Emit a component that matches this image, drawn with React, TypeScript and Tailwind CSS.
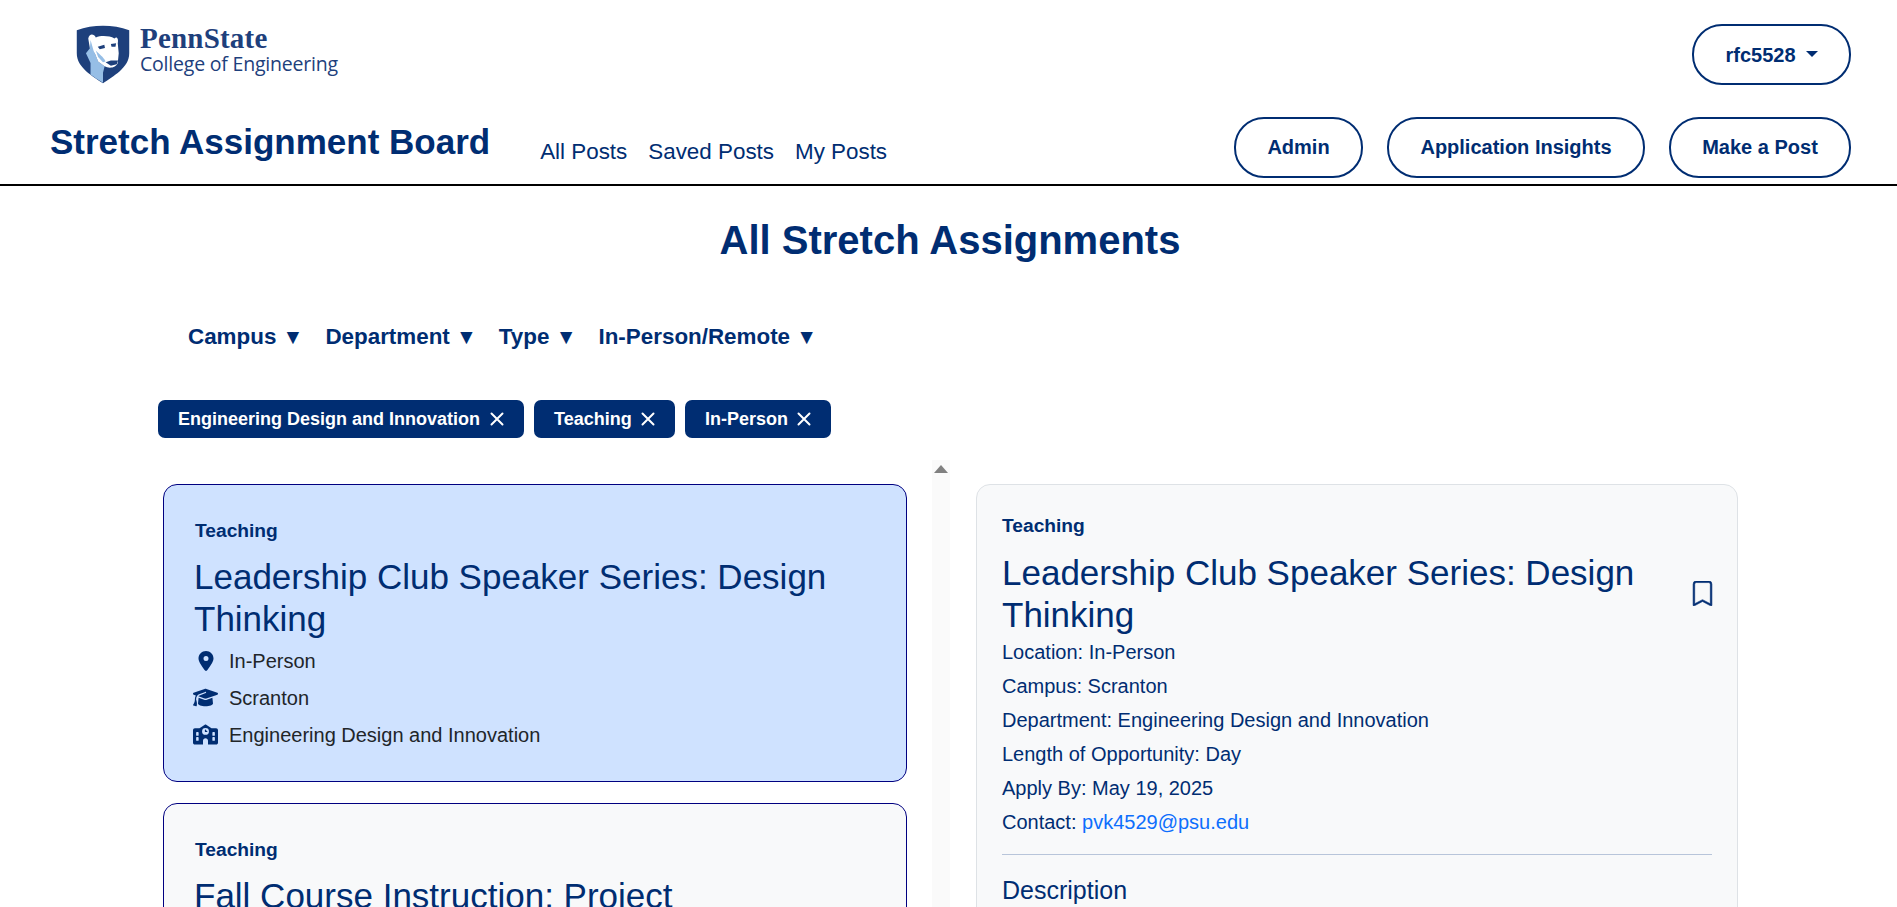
import { FaGraduationCap, FaSchool, FaLocationDot } from "react-icons/fa6";
import { BsBookmark } from "react-icons/bs";

function Shield() {
  return (
    <svg viewBox="18 14 164 180" className="w-[54px] h-[59px] shrink-0">
      <path d="M20 30 C70 12 130 12 180 30 L180 100 C180 145 130 170 100 192 C70 170 20 145 20 100 Z" fill="#1e407c" />
      <path d="M48 100 L60 85 L75 100 L85 125 L105 140 L100 160 L100 190 L80 178 L62 165 L62 130 Z" fill="#96bee6" />
      <path d="M55 55 C58 40 72 40 78 52 C95 45 120 47 135 55 C142 48 148 55 145 70 L148 100 L145 130 C140 145 118 148 105 140 L85 125 L75 100 L60 85 Z" fill="#fff" />
      <path d="M62 60 L72 95 L85 125 L75 118 L60 85 Z M78 92 C90 105 100 110 108 125 L100 128 L85 112 Z" fill="#96bee6" />
      <path d="M84 80 L104 74 L106 84 L90 88 Z M124 72 L140 70 L138 80 L126 80 Z" fill="#1e407c" />
      <path d="M108 128 L124 122 L146 122 L142 134 L124 138 Z" fill="#1e407c" />
    </svg>
  );
}

function PillButton({ children, className }: { children: React.ReactNode; className: string }) {
  return (
    <button className={`h-[61px] rounded-[30px] border-2 border-[#002d72] text-[#002d72] font-bold text-[20px] bg-white flex items-center justify-center ${className}`}>
      {children}
    </button>
  );
}

function Tag({ label, className }: { label: string; className: string }) {
  return (
    <span className={`h-[38px] rounded-[7px] bg-[#002d72] text-white font-bold text-[18px] flex items-center justify-between pl-[20px] pr-[20px] ${className}`}>
      <span>{label}</span>
      <svg viewBox="0 0 14 14" className="w-[14px] h-[14px]">
        <path d="M1.5 1.5 L12.5 12.5 M12.5 1.5 L1.5 12.5" stroke="#fff" strokeWidth="2" strokeLinecap="round" />
      </svg>
    </span>
  );
}

function Meta({ icon, text }: { icon: React.ReactNode; text: string }) {
  return (
    <div className="flex items-center h-[37px]">
      <span className="w-[25px] h-[25px] flex items-center justify-center text-[#002d72]">{icon}</span>
      <span className="ml-[11px] text-[20px] text-[#212529]">{text}</span>
    </div>
  );
}

function Filter({ label }: { label: string }) {
  return (
    <span className="h-[27px] overflow-visible">
      {label} <span className="text-[21px] leading-none">▼</span>
    </span>
  );
}

export default function App() {
  return (
    <div className="h-[907px] overflow-hidden bg-white text-[#002d72] font-['Liberation_Sans',Arial,sans-serif]">
      <header className="h-[186px] border-b-2 border-black px-[46px] flex flex-col">
        <div className="h-[117px] flex justify-between items-start">
          <div className="flex items-center gap-[10px] ml-[30px] mt-[25px] text-[#1e407c]">
            <Shield />
            <div className="mt-[-10px]">
              <div className="font-['Liberation_Serif',serif] font-bold text-[29px] leading-[29px] tracking-[0.2px]">PennState</div>
              <div className="font-['Open_Sans',sans-serif] text-[19.5px] leading-[22px] tracking-[-0.2px]">College of Engineering</div>
            </div>
          </div>
          <PillButton className="w-[159px] mt-[24px] gap-[10px]">
            <span>rfc5528</span>
            <span className="w-0 h-0 border-x-[6px] border-x-transparent border-t-[6px] border-t-[#002d72] mb-[2px]" />
          </PillButton>
        </div>
        <div className="flex items-start justify-between">
          <div className="flex items-start">
            <div className="ml-[4px] font-bold text-[35px] leading-[42px] mt-[4px]">Stretch Assignment Board</div>
            <nav className="flex gap-[21px] ml-[50px] mt-[21px] text-[22.4px] leading-[27px]">
              <span>All Posts</span>
              <span>Saved Posts</span>
              <span>My Posts</span>
            </nav>
          </div>
          <div className="flex gap-[24px]">
            <PillButton className="w-[129px] pb-[2px]">Admin</PillButton>
            <PillButton className="w-[258px] pb-[2px]">Application Insights</PillButton>
            <PillButton className="w-[182px] pb-[2px]">Make a Post</PillButton>
          </div>
        </div>
      </header>

      <h1 className="text-center font-bold text-[40px] leading-[48px] mt-[30px] pl-[3px]">All Stretch Assignments</h1>

      <div className="flex h-[27px] gap-[22px] ml-[188px] mt-[59px] font-bold text-[22.4px] leading-[27px]">
        <Filter label="Campus" />
        <Filter label="Department" />
        <Filter label="Type" />
        <Filter label="In-Person/Remote" />
      </div>

      <div className="flex gap-[10px] ml-[158px] mt-[50px]">
        <Tag label="Engineering Design and Innovation" className="w-[366px]" />
        <Tag label="Teaching" className="w-[141px]" />
        <Tag label="In-Person" className="w-[146px]" />
      </div>

      <div className="flex ml-[163px] mt-[22px] h-[447px]">
        <div className="w-[744px] pt-[24px] flex flex-col gap-[21px] shrink-0">
          <article className="h-[298px] shrink-0 rounded-[14px] border border-[#000080] bg-[#cfe2ff] pl-[31px] pt-[35px]">
            <div className="font-bold text-[19.2px] leading-[22px]">Teaching</div>
            <h2 className="text-[35px] leading-[42px] mt-[14px] -ml-[1px] w-[680px]">Leadership Club Speaker Series: Design Thinking</h2>
            <div className="mt-[2px] -ml-[2px]">
              <Meta icon={<FaLocationDot size={20} />} text="In-Person" />
              <Meta icon={<FaGraduationCap size={25} />} text="Scranton" />
              <Meta icon={<FaSchool size={25} />} text="Engineering Design and Innovation" />
            </div>
          </article>
          <article className="h-[298px] shrink-0 rounded-[14px] border border-[#000080] bg-[#f8f9fa] pl-[31px] pt-[35px]">
            <div className="font-bold text-[19.2px] leading-[22px]">Teaching</div>
            <h2 className="text-[35px] leading-[42px] mt-[14px] -ml-[1px] w-[680px]">Fall Course Instruction: Project</h2>
          </article>
        </div>
        <div className="w-[18px] ml-[25px] bg-[#fafafa] shrink-0 flex justify-center pt-[3px]">
          <span className="w-0 h-0 border-x-[7px] border-x-transparent border-b-[8px] border-b-[#808080] mt-[2px]" />
        </div>
        <article className="w-[762px] h-[500px] mt-[24px] ml-[26px] shrink-0 rounded-[14px] border border-[#dee2e6] bg-[#f8f9fa] pl-[25px] pr-[25px] pt-[30px]">
          <div className="font-bold text-[19.2px] leading-[22px]">Teaching</div>
          <div className="flex items-center justify-between mt-[15px]">
            <h2 className="text-[35px] leading-[42px] w-[650px]">Leadership Club Speaker Series: Design Thinking</h2>
            <BsBookmark size={25} className="-mr-[3px] -mt-[2px] shrink-0" strokeWidth={0.4} />
          </div>
          <div className="text-[20px] leading-[34px] mt-[-1px]">
            <div>Location: In-Person</div>
            <div>Campus: Scranton</div>
            <div>Department: Engineering Design and Innovation</div>
            <div>Length of Opportunity: Day</div>
            <div>Apply By: May 19, 2025</div>
            <div>Contact: <span className="text-[#0d6efd]">pvk4529@psu.edu</span></div>
          </div>
          <div className="h-px bg-[#b8c5da] mt-[15px]" />
          <h3 className="text-[25px] leading-[30px] mt-[20px]">Description</h3>
        </article>
      </div>
    </div>
  );
}
